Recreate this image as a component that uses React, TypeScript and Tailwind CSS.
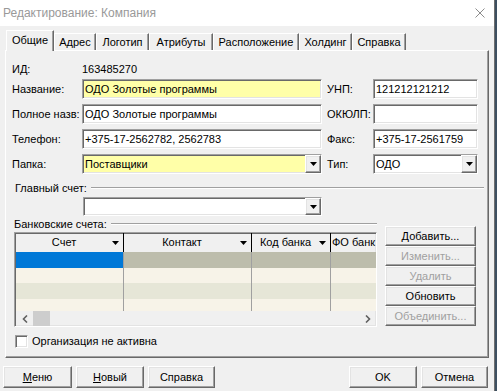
import React from 'react';

const raised =
  'border border-t-white border-l-white border-r-[#696969] border-b-[#696969] shadow-[inset_-1px_-1px_0_#a0a0a0,inset_1px_1px_0_#e3e3e3]';
const sunken =
  'border border-t-[#a0a0a0] border-l-[#a0a0a0] border-r-white border-b-white shadow-[inset_1px_1px_0_#696969,inset_-1px_-1px_0_#e3e3e3]';

const Tri = () => (
  <svg width="7" height="4" viewBox="0 0 7 4">
    <path d="M0 0h7L3.5 4z" fill="#000" />
  </svg>
);

const DropBtn = () => (
  <div className={`w-[16px] flex items-center justify-center bg-[#f0f0f0] ${raised}`}>
    <Tri />
  </div>
);

function Field({
  className,
  children,
  drop,
}: {
  className: string;
  children?: React.ReactNode;
  drop?: boolean;
}) {
  return (
    <div className={`flex items-stretch ${sunken} ${className}`}>
      <div className="flex-1 flex items-center pl-[2px] overflow-hidden whitespace-nowrap">{children}</div>
      {drop && <DropBtn />}
    </div>
  );
}

const tabs = [
  { name: 'Адрес', w: 'w-[42px]' },
  { name: 'Логотип', w: 'w-[53px]' },
  { name: 'Атрибуты', w: 'w-[64px]' },
  { name: 'Расположение', w: 'w-[86px]' },
  { name: 'Холдинг', w: 'w-[53px]' },
  { name: 'Справка', w: 'w-[54px]' },
];

const columns = [
  { name: 'Счет', w: 'w-[108px]' },
  { name: 'Контакт', w: 'w-[128px]' },
  { name: 'Код банка', w: 'w-[79px]' },
];

const rows = [
  { h: 'h-[16px]', first: 'bg-[#0078d7]', rest: 'bg-[#bdbdac]' },
  { h: 'h-[15px]', first: 'bg-[#f7f3e8]', rest: 'bg-[#f7f3e8]' },
  { h: 'h-[16px]', first: 'bg-[#e6e6d7]', rest: 'bg-[#e6e6d7]' },
  { h: 'h-[12px]', first: 'bg-[#f7f3e8]', rest: 'bg-[#f7f3e8]' },
];

const sideButtons = [
  { name: 'Добавить...', on: true },
  { name: 'Изменить...', on: false },
  { name: 'Удалить', on: false },
  { name: 'Обновить', on: true },
  { name: 'Объединить...', on: false },
];

export default function App() {
  return (
    <div className="w-[497px] h-[391px] flex bg-[#3d4f60] font-['Liberation_Sans',Arial,sans-serif] text-[11px] text-black overflow-hidden">
      <div className="w-[494px] h-full flex flex-col bg-[#f0f0f0]">
        {/* title bar */}
        <div className="h-[26px] shrink-0 bg-white flex items-center justify-between pl-[3px] pr-[9px]">
          <span className="text-[12px] text-[#999999]">Редактирование: Компания</span>
          <svg width="10" height="10" viewBox="0 0 10 10">
            <path d="M0.5 0.5l9 9M9.5 0.5l-9 9" stroke="#8c8c8c" strokeWidth="1" />
          </svg>
        </div>

        {/* tabs */}
        <div className="h-[24px] shrink-0 flex items-end pl-[6px]">
          <div className="relative z-10 -mb-px w-[48px] h-[21px] bg-[#f0f0f0] border border-b-0 border-t-white border-l-white border-r-[#696969] shadow-[inset_-1px_0_0_#a0a0a0] flex items-center justify-center pb-[2px]">
            Общие
          </div>
          {tabs.map((t) => (
            <div
              key={t.name}
              className={`${t.w} h-[17px] border border-b-0 border-t-white border-l-white border-r-[#696969] shadow-[inset_-1px_0_0_#a0a0a0] flex items-center justify-center`}
            >
              {t.name}
            </div>
          ))}
        </div>

        {/* panel */}
        <div className="ml-[5px] w-[484px] h-[308px] shrink-0 flex flex-col border border-t-white border-l-white border-r-[#696969] border-b-[#696969] shadow-[inset_-1px_-1px_0_#a0a0a0]">
          <div className="mt-[8px] h-[20px] flex items-center pl-[6px]">
            <span className="w-[70px]">ИД:</span>
            <span>163485270</span>
          </div>

          <div className="pl-[6px] grid grid-cols-[70px_240px_5px_46px_105px] auto-rows-[20px] gap-y-[5px]">
            <span className="self-center">Название:</span>
            <Field className="bg-[#ffffa8]">ОДО Золотые программы</Field>
            <span />
            <span className="self-center">УНП:</span>
            <Field className="bg-white">121212121212</Field>

            <span className="self-center">Полное назв:</span>
            <Field className="bg-white">ОДО Золотые программы</Field>
            <span />
            <span className="self-center">ОКЮЛП:</span>
            <Field className="bg-white" />

            <span className="self-center">Телефон:</span>
            <Field className="bg-white">+375-17-2562782, 2562783</Field>
            <span />
            <span className="self-center">Факс:</span>
            <Field className="bg-white">+375-17-2561759</Field>

            <span className="self-center">Папка:</span>
            <Field className="bg-[#ffffa8]" drop>
              Поставщики
            </Field>
            <span />
            <span className="self-center">Тип:</span>
            <Field className="bg-white" drop>
              ОДО
            </Field>
          </div>

          {/* main account */}
          <div className="mt-[6px] h-[16px] flex items-center pl-[9px] w-[478px]">
            <span className="mr-[4px]">Главный счет:</span>
            <div className="flex-1 h-[2px] border-t border-t-[#a0a0a0] border-b border-b-white" />
          </div>
          <Field className="ml-[77px] mt-[1px] w-[239px] h-[19px] bg-white" drop />

          {/* bank accounts */}
          <div className="flex">
            <div className="ml-[8px] flex flex-col">
              <div className="h-[16px] flex items-center w-[363px]">
                <span className="mr-[4px]">Банковские счета:</span>
                <div className="flex-1 h-[2px] border-t border-t-[#a0a0a0] border-b border-b-white" />
              </div>
              <div className={`w-[363px] h-[95px] flex flex-col overflow-hidden ${sunken} bg-[#f0f0f0]`}>
                <div className="h-[19px] shrink-0 flex pl-[1px]">
                  {columns.map((c) => (
                    <div key={c.name} className={`${c.w} shrink-0 flex items-center pr-[4px] border-r border-r-black`}>
                      <span className="flex-1 text-center whitespace-nowrap">{c.name}</span>
                      <Tri />
                    </div>
                  ))}
                  <div className="flex-1 flex items-center pl-[1px] whitespace-nowrap">ФО банк</div>
                </div>
                {rows.map((r, i) => (
                  <div key={i} className={`${r.h} shrink-0 flex pl-[1px]`}>
                    <div className={`w-[108px] shrink-0 border-r border-r-[#a0a0a0] ${r.first}`} />
                    <div className={`w-[128px] shrink-0 border-r border-r-[#a0a0a0] ${r.rest}`} />
                    <div className={`w-[79px] shrink-0 border-r border-r-[#a0a0a0] ${r.rest}`} />
                    <div className={`flex-1 ${r.rest}`} />
                  </div>
                ))}
                <div className="flex-1 flex items-center pl-[1px]">
                  <div className="w-[17px] flex justify-center">
                    <svg width="6" height="8" viewBox="0 0 6 8">
                      <path d="M5 0.5L1.5 4L5 7.5" stroke="#606060" strokeWidth="1.6" fill="none" />
                    </svg>
                  </div>
                  <div className="w-[17px] self-stretch bg-[#cdcdcd]" />
                  <div className="flex-1" />
                  <div className="w-[17px] flex justify-center">
                    <svg width="6" height="8" viewBox="0 0 6 8">
                      <path d="M1 0.5L4.5 4L1 7.5" stroke="#606060" strokeWidth="1.6" fill="none" />
                    </svg>
                  </div>
                </div>
              </div>
            </div>
            <div className="ml-[8px] mt-[10px] flex flex-col">
              {sideButtons.map((b) => (
                <div
                  key={b.name}
                  className={`w-[91px] h-[20px] flex items-center justify-center bg-[#f0f0f0] ${raised} ${
                    b.on ? 'text-black' : 'text-[#a0a0a0]'
                  }`}
                >
                  {b.name}
                </div>
              ))}
            </div>
          </div>

          {/* inactive checkbox */}
          <div className="mt-[7px] h-[14px] flex items-center pl-[9px]">
            <div className={`w-[13px] h-[13px] bg-white ${sunken}`} />
            <span className="ml-[4px]">Организация не активна</span>
          </div>
        </div>

        {/* bottom buttons */}
        <div className="mt-[8px] h-[22px] flex pl-[3px] pr-[6px]">
          <div className="flex gap-[4px]">
            <div className={`w-[69px] flex items-center justify-center ${raised}`}>
              <span>
                <span className="underline">М</span>еню
              </span>
            </div>
            <div className={`w-[68px] flex items-center justify-center ${raised}`}>
              <span>
                <span className="underline">Н</span>овый
              </span>
            </div>
            <div className={`w-[67px] flex items-center justify-center ${raised}`}>Справка</div>
          </div>
          <div className="ml-auto flex gap-[4px]">
            <div className={`w-[68px] flex items-center justify-center ${raised}`}>OK</div>
            <div className={`w-[67px] flex items-center justify-center ${raised}`}>Отмена</div>
          </div>
        </div>
      </div>
      <div className="w-px h-full bg-[#6e6e6e]" />
    </div>
  );
}
